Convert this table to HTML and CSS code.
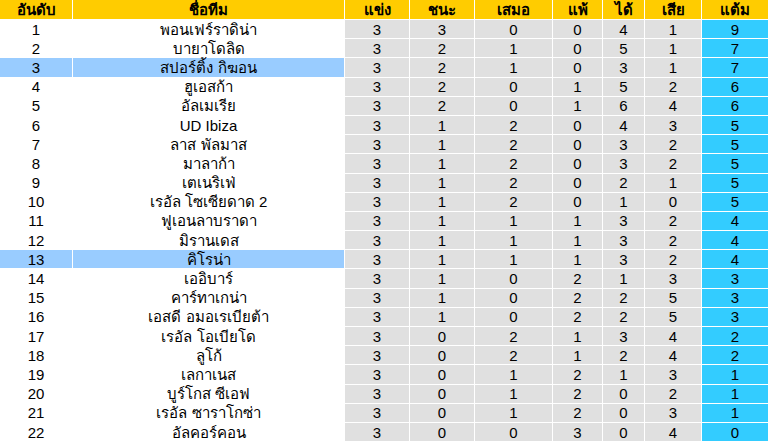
FILE: index.html
```html
<!DOCTYPE html>
<html lang="th">
<head>
<meta charset="utf-8">
<title>ตารางคะแนน</title>
<link rel="stylesheet" href="styles.css">
</head>
<body>
<div class="table">
  <div class="row head">
    <div class="c">อันดับ</div><div class="c">ชื่อทีม</div><div class="c">แข่ง</div><div class="c">ชนะ</div><div class="c">เสมอ</div><div class="c">แพ้</div><div class="c">ได้</div><div class="c">เสีย</div><div class="c">แต้ม</div>
  </div>
  <div class="row"><div class="c w">1</div><div class="c w">พอนเฟร์ราดิน่า</div><div class="c g">3</div><div class="c g">3</div><div class="c g">0</div><div class="c g">0</div><div class="c g">4</div><div class="c g">1</div><div class="c p">9</div></div>
  <div class="row"><div class="c w">2</div><div class="c w">บายาโดลิด</div><div class="c g">3</div><div class="c g">2</div><div class="c g">1</div><div class="c g">0</div><div class="c g">5</div><div class="c g">1</div><div class="c p">7</div></div>
  <div class="row hl"><div class="c w">3</div><div class="c w">สปอร์ติ้ง กิฆอน</div><div class="c g">3</div><div class="c g">2</div><div class="c g">1</div><div class="c g">0</div><div class="c g">3</div><div class="c g">1</div><div class="c p">7</div></div>
  <div class="row"><div class="c w">4</div><div class="c w">ฮูเอสก้า</div><div class="c g">3</div><div class="c g">2</div><div class="c g">0</div><div class="c g">1</div><div class="c g">5</div><div class="c g">2</div><div class="c p">6</div></div>
  <div class="row"><div class="c w">5</div><div class="c w">อัลเมเรีย</div><div class="c g">3</div><div class="c g">2</div><div class="c g">0</div><div class="c g">1</div><div class="c g">6</div><div class="c g">4</div><div class="c p">6</div></div>
  <div class="row"><div class="c w">6</div><div class="c w">UD Ibiza</div><div class="c g">3</div><div class="c g">1</div><div class="c g">2</div><div class="c g">0</div><div class="c g">4</div><div class="c g">3</div><div class="c p">5</div></div>
  <div class="row"><div class="c w">7</div><div class="c w">ลาส พัลมาส</div><div class="c g">3</div><div class="c g">1</div><div class="c g">2</div><div class="c g">0</div><div class="c g">3</div><div class="c g">2</div><div class="c p">5</div></div>
  <div class="row"><div class="c w">8</div><div class="c w">มาลาก้า</div><div class="c g">3</div><div class="c g">1</div><div class="c g">2</div><div class="c g">0</div><div class="c g">3</div><div class="c g">2</div><div class="c p">5</div></div>
  <div class="row"><div class="c w">9</div><div class="c w">เตเนริเฟ่</div><div class="c g">3</div><div class="c g">1</div><div class="c g">2</div><div class="c g">0</div><div class="c g">2</div><div class="c g">1</div><div class="c p">5</div></div>
  <div class="row"><div class="c w">10</div><div class="c w">เรอัล โซเซียดาด 2</div><div class="c g">3</div><div class="c g">1</div><div class="c g">2</div><div class="c g">0</div><div class="c g">1</div><div class="c g">0</div><div class="c p">5</div></div>
  <div class="row"><div class="c w">11</div><div class="c w">ฟูเอนลาบราดา</div><div class="c g">3</div><div class="c g">1</div><div class="c g">1</div><div class="c g">1</div><div class="c g">3</div><div class="c g">2</div><div class="c p">4</div></div>
  <div class="row"><div class="c w">12</div><div class="c w">มิรานเดส</div><div class="c g">3</div><div class="c g">1</div><div class="c g">1</div><div class="c g">1</div><div class="c g">3</div><div class="c g">2</div><div class="c p">4</div></div>
  <div class="row hl"><div class="c w">13</div><div class="c w">คิโรน่า</div><div class="c g">3</div><div class="c g">1</div><div class="c g">1</div><div class="c g">1</div><div class="c g">3</div><div class="c g">2</div><div class="c p">4</div></div>
  <div class="row"><div class="c w">14</div><div class="c w">เออิบาร์</div><div class="c g">3</div><div class="c g">1</div><div class="c g">0</div><div class="c g">2</div><div class="c g">1</div><div class="c g">3</div><div class="c p">3</div></div>
  <div class="row"><div class="c w">15</div><div class="c w">คาร์ทาเกน่า</div><div class="c g">3</div><div class="c g">1</div><div class="c g">0</div><div class="c g">2</div><div class="c g">2</div><div class="c g">5</div><div class="c p">3</div></div>
  <div class="row"><div class="c w">16</div><div class="c w">เอสดี อมอเรเบียต้า</div><div class="c g">3</div><div class="c g">1</div><div class="c g">0</div><div class="c g">2</div><div class="c g">2</div><div class="c g">5</div><div class="c p">3</div></div>
  <div class="row"><div class="c w">17</div><div class="c w">เรอัล โอเบียโด</div><div class="c g">3</div><div class="c g">0</div><div class="c g">2</div><div class="c g">1</div><div class="c g">3</div><div class="c g">4</div><div class="c p">2</div></div>
  <div class="row"><div class="c w">18</div><div class="c w">ลูโก้</div><div class="c g">3</div><div class="c g">0</div><div class="c g">2</div><div class="c g">1</div><div class="c g">2</div><div class="c g">4</div><div class="c p">2</div></div>
  <div class="row"><div class="c w">19</div><div class="c w">เลกาเนส</div><div class="c g">3</div><div class="c g">0</div><div class="c g">1</div><div class="c g">2</div><div class="c g">1</div><div class="c g">3</div><div class="c p">1</div></div>
  <div class="row"><div class="c w">20</div><div class="c w">บูร์โกส ซีเอฟ</div><div class="c g">3</div><div class="c g">0</div><div class="c g">1</div><div class="c g">2</div><div class="c g">0</div><div class="c g">2</div><div class="c p">1</div></div>
  <div class="row"><div class="c w">21</div><div class="c w">เรอัล ซาราโกซ่า</div><div class="c g">3</div><div class="c g">0</div><div class="c g">1</div><div class="c g">2</div><div class="c g">0</div><div class="c g">3</div><div class="c p">1</div></div>
  <div class="row"><div class="c w">22</div><div class="c w">อัลคอร์คอน</div><div class="c g">3</div><div class="c g">0</div><div class="c g">0</div><div class="c g">3</div><div class="c g">0</div><div class="c g">4</div><div class="c p">0</div></div>
</div>
</body>
</html>
```

FILE: styles.css
```css
html, body {
  margin: 0;
  padding: 0;
  background: #ffffff;
}
body {
  font-family: "Liberation Sans", Arial, sans-serif;
  font-size: 15px;
  color: #000000;
  overflow: hidden;
}
.table {
  display: flex;
  flex-direction: column;
  gap: 1px;
  width: 768px;
}
.row {
  display: grid;
  grid-template-columns: 72px 271px 64px 64px 77px 49px 41px 56px 1fr;
  column-gap: 1px;
  height: 18.2px;
}
.row.head {
  height: 19px;
}
.c {
  display: flex;
  align-items: center;
  justify-content: center;
  white-space: nowrap;
  line-height: 1;
}
.head .c {
  background: #ffcc00;
  font-weight: bold;
}
.w { background: #ffffff; }
.g { background: #e0e0e0; }
.p { background: #33ccff; }
.hl .w { background: #99ccff; }
```
